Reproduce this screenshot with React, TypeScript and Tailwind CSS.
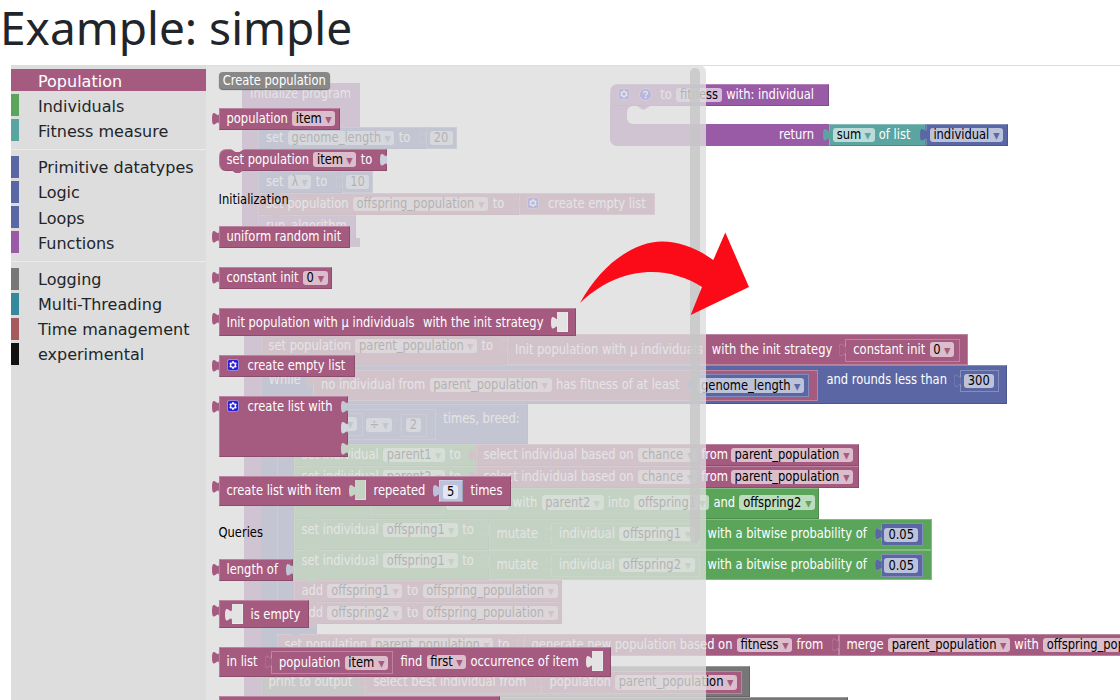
import React from 'react';

const PINK = '#a55b80';
const BLUE = '#5b67a5';
const GREEN = '#5ba55b';
const PURPLE = '#995ba5';
const TEAL = '#5ba5a1';
const GRAY = '#777777';
const PANEL = '#e3e3e3';

const Gear = () => (
  <svg className="mt-[1.7px] mr-[4.7px] h-3 w-3 shrink-0" viewBox="0 0 16 16">
    <rect x="0.5" y="0.5" width="15" height="15" rx="3" fill="#2b1fd6" stroke="#b9b5f2" />
    <path
      fill="#fff"
      d="m4.203,7.296 0,1.368 -0.92,0.677 -0.11,0.41 0.9,1.59 0.41,0.11 1.043,-0.457 1.187,0.683 0.127,1.134 0.3,0.3 1.8,0 0.3,-0.299 0.127,-1.138 1.185,-0.682 1.046,0.458 0.409,-0.11 0.9,-1.59 -0.11,-0.41 -0.92,-0.677 0,-1.366 0.92,-0.677 0.11,-0.41 -0.9,-1.59 -0.409,-0.109 -1.046,0.458 -1.185,-0.682 -0.127,-1.138 -0.3,-0.299 -1.8,0 -0.3,0.3 -0.126,1.135 -1.187,0.682 -1.043,-0.457 -0.41,0.11 -0.899,1.59 0.108,0.409z"
    />
    <circle cx="8" cy="8" r="2.4" fill="#2b1fd6" />
  </svg>
);

const Help = () => (
  <svg className="mt-[1.5px] mr-[4px] h-[13px] w-[13px] shrink-0" viewBox="0 0 16 16">
    <circle cx="8" cy="8" r="7.5" fill="#2b1fd6" stroke="#b9b5f2" />
    <path d="M5.7 6.4c0-3 4.7-3 4.7-.3 0 1.7-2.2 1.6-2.2 3.4" fill="none" stroke="#fff" strokeWidth="1.7" />
    <circle cx="8.1" cy="11.7" r="1.1" fill="#fff" />
  </svg>
);

const TAB_PATH = 'M8,5 c0,10 -8,-8 -8,7.5 s8,-2.5 8,7.5z';

const OutputTab = ({ color, edge }: { color: string; edge?: boolean }) => (
  <svg className="absolute -top-px -left-[7.2px] z-10 h-[17.4px] w-[7px]" viewBox="0 0 8 20">
    <path d={TAB_PATH} fill={color} stroke={edge ? 'rgba(255,255,255,.2)' : 'none'} />
  </svg>
);

const Notch = ({ color }: { color: string }) => (
  <svg className="absolute top-full left-[11px] z-10 h-[3.6px] w-[13px]" viewBox="0 0 15 4">
    <path d="M0,0 L6,4 L9,4 L15,0z" fill={color} />
  </svg>
);

type BlockProps = {
  w: number;
  h?: number;
  color: string;
  pt?: number;
  pl?: number;
  ml?: number;
  mt?: number;
  tab?: boolean;
  frame?: boolean;
  notch?: boolean;
  flat?: boolean;
  round?: string;
  holes?: [number, string][];
  children?: React.ReactNode;
};

const Block = ({
  w,
  h = 22,
  color,
  pt = 2.5,
  pl = 8,
  ml = 0,
  mt = 0,
  tab,
  frame,
  notch,
  flat,
  round = '',
  holes = [],
  children,
}: BlockProps) => (
  <div
    className={`relative flex shrink-0 items-start gap-[4.3px] border ${round} ${
      flat ? 'border-transparent' : frame ? 'border-white/25' : 'border-t-white/25 border-l-white/20 border-r-black/15 border-b-black/15'
    }`}
    style={{
      width: w,
      height: h,
      backgroundColor: color,
      paddingTop: pt - 1,
      paddingLeft: pl - 1,
      marginLeft: ml,
      marginTop: mt,
    }}
  >
    {children}
    {tab && <OutputTab color={color} edge={frame} />}
    {notch && <Notch color={color} />}
    {holes.map(([y, fill]) => (
      <svg key={y} className="absolute -right-px h-[17.4px] w-[7px]" style={{ top: y - 1 }} viewBox="0 0 8 20">
        <path d={TAB_PATH} fill={fill} />
      </svg>
    ))}
  </div>
);

type TextProps = { w?: number; ml?: number; dark?: boolean; children: string };

const T = ({ w, ml = 0, dark, children }: TextProps) => (
  <span
    className={`mt-[0.6px] block h-4 shrink-0 origin-[50%_75%] scale-y-[1.05] leading-4 whitespace-pre ${
      dark ? 'text-black' : 'text-white'
    }`}
    style={{ width: w, marginLeft: ml }}
  >
    {children}
  </span>
);

const F = ({ w, c, ml = 0, children }: { w: number; c?: string; ml?: number; children?: string }) => (
  <span
    className={`mt-[1.3px] flex h-[14.4px] shrink-0 items-center rounded-[3px] bg-white/60 px-[3.7px] leading-4 text-black ${
      c ? 'justify-between' : 'justify-center'
    }`}
    style={{ width: w, marginLeft: ml }}
  >
    <span className="origin-[50%_75%] scale-y-[1.05] whitespace-pre">{children}</span>
    {c && (
      <span className="text-[14px]" style={{ color: c }}>
        ▾
      </span>
    )}
  </span>
);

const Socket = ({ ml = 0, h = 20, color = PANEL }: { ml?: number; h?: number; color?: string }) => (
  <div
    className="relative -mt-[2.1px] w-[11px] shrink-0 border-r border-b border-white/30"
    style={{ height: h, marginLeft: ml, backgroundColor: color }}
  >
    <svg className="absolute top-0 -left-[6.3px] h-[17.4px] w-[7px]" viewBox="0 0 8 20">
      <path d={TAB_PATH} fill={color} />
    </svg>
  </div>
);

const Line = ({ children }: { children: React.ReactNode }) => <div className="flex">{children}</div>;

const InitializeProgram = () => (
  <div className="absolute top-[83px] left-[242px] flex flex-col">
    <Block w={117.5} h={44} color={PURPLE} flat>
      <T>Initialize program</T>
    </Block>
    <Line>
      <div className="w-4 bg-[#995ba5]" />
      <div className="flex flex-col">
        <Line>
          <Block w={167.5} color={BLUE} notch>
            <T>set</T>
            <F w={106.5} c={BLUE}>genome_length</F>
            <T>to</T>
          </Block>
          <Block w={31} color={BLUE} tab frame pl={4}>
            <F w={23}>20</F>
          </Block>
        </Line>
        <Block w={115} color={BLUE} notch />
        <Line>
          <Block w={84} color={BLUE} notch>
            <T>set</T>
            <F w={23.5} c={BLUE}>λ</F>
            <T>to</T>
          </Block>
          <Block w={31} color={BLUE} tab frame pl={4}>
            <F w={23}>10</F>
          </Block>
        </Line>
        <Line>
          <Block w={261} color={PINK} notch>
            <T>set population</T>
            <F w={135.5} c={PINK}>offspring_population</F>
            <T>to</T>
          </Block>
          <Block w={135.5} color={PINK} tab frame>
            <Gear />
            <T>create empty list</T>
          </Block>
        </Line>
        <Block w={97.5} h={23} color={PURPLE}>
          <T>run_algorithm</T>
        </Block>
      </div>
    </Line>
    <Block w={117.5} h={9} color={PURPLE} flat />
  </div>
);

const FitnessFunction = () => (
  <div className="absolute top-[84px] left-[610px] flex flex-col">
    <Block w={219} color={PURPLE} round="rounded-tl-[7px]">
      <Gear />
      <Help />
      <T>to</T>
      <F w={45.7}>fitness</F>
      <T>with: individual</T>
    </Block>
    <div className="flex h-[18px] w-[30px] bg-[#995ba5] pl-[17px]">
      <div className="relative w-[13px] rounded-l-[6px] bg-white">
        <svg className="absolute top-0 left-[10px] h-[3.6px] w-[13px]" viewBox="0 0 15 4">
          <path d="M0,0 L6,4 L9,4 L15,0z" fill={PURPLE} />
        </svg>
      </div>
    </div>
    <Line>
      <Block w={219} color={PURPLE} pl={169} flat round="rounded-bl-[7px]">
        <T>return</T>
      </Block>
      <Block w={97} color={TEAL} tab pl={4}>
        <F w={41.5} c={TEAL}>sum</F>
        <T>of list</T>
      </Block>
      <Block w={81.5} color={BLUE} tab pl={3.7}>
        <F w={73.7} c={BLUE}>individual</F>
      </Block>
    </Line>
  </div>
);

const SelectRow = ({ parent }: { parent: string }) => (
  <Line>
    <Block w={182} color={GREEN} notch>
      <T>set individual</T>
      <F w={62} c={GREEN}>{parent}</F>
      <T>to</T>
    </Block>
    <Block w={383.5} color={PINK} tab>
      <T>select individual based on</T>
      <F w={59} c={PINK}>chance</F>
      <T w={25.3}>from</T>
      <F w={122.3} c={PINK}>parent_population</F>
    </Block>
  </Line>
);

const MutateRow = ({ source }: { source: string }) => (
  <Line>
    <Block w={195} h={30.75} color={GREEN} notch pt={2.6}>
      <T>set individual</T>
      <F w={75} c={GREEN}>offspring1</F>
      <T>to</T>
    </Block>
    <Block w={443.7} h={30.75} color={GREEN} tab frame pt={6.5}>
      <T w={50.2}>mutate</T>
      <Block w={149} h={23} mt={-2} color={GREEN} tab frame>
        <T>individual</T>
        <F w={75.5} c={GREEN}>{source}</F>
      </Block>
      <T ml={3.2} w={169}>with a bitwise probability of</T>
      <Block w={42} h={23} mt={-2} color={BLUE} tab frame pl={3.7} pt={3}>
        <F w={33.5}>0.05</F>
      </Block>
    </Block>
  </Line>
);

const AddRow = ({ item }: { item: string }) => (
  <Block w={268.5} color={PINK} notch>
    <T>add</T>
    <F w={75} c={PINK}>{item}</F>
    <T>to</T>
    <F w={135} c={PINK}>offspring_population</F>
  </Block>
);

const RepeatLoop = () => (
  <>
    <Block w={251.5} h={39.5} color={BLUE} pt={6.6} pl={23.5}>
      <Block w={136} h={31} mt={-1.6} color={BLUE} frame pt={7}>
        <Block w={55} h={23} mt={-3} color={BLUE} frame pl={17}>
          <F w={32} c={BLUE} />
        </Block>
        <F ml={-1.5} w={26.5} c={BLUE}>÷</F>
        <Block ml={4} w={26} h={23} mt={-2.5} color={BLUE} tab frame pl={5}>
          <F w={15.5}>2</F>
        </Block>
      </Block>
      <T ml={3}>times, breed:</T>
    </Block>
    <Line>
      <div className="w-[17px] border-l border-white/25 bg-[#5b67a5]" />
      <div className="flex flex-col">
        <SelectRow parent="parent1" />
        <SelectRow parent="parent2" />
        <Block w={525.5} h={31} color={GREEN} notch pt={6.4}>
          <Block w={73} h={23} ml={69} mt={-2.5} color={GREEN} frame />
          <F w={63} ml={-2.3} />
          <T>with</T>
          <F w={62} c={GREEN}>parent2</F>
          <T>into</T>
          <F w={75} c={GREEN}>offspring1</F>
          <T>and</T>
          <F w={75.7} c={GREEN}>offspring2</F>
        </Block>
        <MutateRow source="offspring1" />
        <MutateRow source="offspring2" />
        <AddRow item="offspring1" />
        <AddRow item="offspring2" />
      </div>
    </Line>
    <Block w={40} h={9.5} color={BLUE} flat notch />
  </>
);

const Algorithm = () => (
  <div className="absolute top-[312px] left-[243.5px] flex">
    <div className="w-[17px] bg-[#995ba5]" />
    <div className="flex flex-col pt-[22px]">
      <Line>
        <Block w={246.5} h={31} color={PINK} notch pt={3.3}>
          <T>set population</T>
          <F w={121.8} c={PINK}>parent_population</F>
          <T>to</T>
        </Block>
        <Block w={460.5} h={31} color={PINK} tab frame pt={7}>
          <T w={192.5}>Init population with µ individuals</T>
          <T w={129.2}>with the init strategy</T>
          <Block w={114.5} h={23} mt={-2.5} color={PINK} tab frame pt={2.7}>
            <T>constant init</T>
            <F w={24.5} c={PINK}>0</F>
          </Block>
        </Block>
      </Line>
      <Block w={746.5} h={39.3} color={BLUE} pt={6.7}>
        <T w={40.2}>While</T>
        <Block w={505.5} h={31} mt={-2.2} color={PINK} tab frame pt={7}>
          <T>no individual from</T>
          <F w={122} c={PINK}>parent_population</F>
          <T w={133.2}>has fitness of at least</T>
          <Block w={115.7} h={23} mt={-2.5} color={BLUE} tab frame pl={4} pt={3}>
            <F w={106.7} c={BLUE}>genome_length</F>
          </Block>
        </Block>
        <T ml={3.7} w={129.2}>and rounds less than</T>
        <Block w={39.5} h={22.5} mt={-2.2} color={BLUE} tab frame pl={4} pt={2.8}>
          <F w={29.7}>300</F>
        </Block>
      </Block>
      <Line>
        <div className="w-4 bg-[#5b67a5]" />
        <div className="flex flex-col">
          <RepeatLoop />
          <Line>
            <Block w={247} h={22.2} color={PINK} notch pt={2.8}>
              <T>set population</T>
              <F w={122} c={PINK}>parent_population</F>
              <T>to</T>
            </Block>
            <Block w={315} h={22.2} color={PINK} tab frame pt={2.8}>
              <T w={200.9}>generate new population based on</T>
              <F w={55.5} c={PINK}>fitness</F>
              <T>from</T>
            </Block>
            <Block w={350} h={22.2} color={PINK} tab frame pt={2.8}>
              <T>merge</T>
              <F w={122} c={PINK}>parent_population</F>
              <T>with</T>
              <F w={135.5} c={PINK}>offspring_population</F>
            </Block>
          </Line>
        </div>
      </Line>
      <Block w={100} h={10.5} color={BLUE} flat notch />
      <Block w={489.5} h={30.5} color={GRAY} notch pt={6.8}>
        <T w={92.7}>print to output</T>
        <Block w={377} h={23} mt={-2.2} color={PINK} tab frame pt={2.8}>
          <T w={163.7}>select best individual from</T>
          <Block w={201} h={23} mt={-2.8} color={PINK} tab frame pt={2.8}>
            <T>population</T>
            <F w={122} c={PINK}>parent_population</F>
          </Block>
        </Block>
      </Block>
      <Block w={587} h={20} color={GRAY} />
    </div>
  </div>
);

const FlyoutBlocks = () => (
  <div className="flex flex-col gap-[19px] pt-[6px] pl-[12.5px]">
    <div className="-mb-[0.5px] mt-[0.5px] flex h-[17.7px] w-[111.5px] items-center justify-center rounded-[4px] bg-[#888] leading-4 text-white shadow-[0_1px_1px_#666]">
      <span className="relative top-px scale-y-[1.05]">Create population</span>
    </div>
    <Block w={121} color={PINK} tab>
      <T>population</T>
      <F w={43.3} c={PINK}>item</F>
    </Block>
    <Block w={168.2} color={PINK} notch round="rounded-l-[7px]" holes={[[0, '#ccd0dd']]}>
      <svg className="absolute -top-px left-[11px] h-[3.6px] w-[13px]" viewBox="0 0 15 4">
        <path d="M0,0 L6,4 L9,4 L15,0z" fill={PANEL} />
      </svg>
      <T>set population</T>
      <F w={43} c={PINK}>item</F>
      <T>to</T>
    </Block>
    <div className="h-[17.3px] pt-[1.9px]">
      <T dark>Initialization</T>
    </div>
    <Block w={131.8} color={PINK} tab>
      <T>uniform random init</T>
    </Block>
    <Block w={113.5} color={PINK} tab>
      <T>constant init</T>
      <F w={25} c={PINK}>0</F>
    </Block>
    <Block w={357.5} h={28} color={PINK} tab pt={6.4}>
      <T w={192.2}>Init population with µ individuals</T>
      <T w={129.7}>with the init strategy</T>
      <Socket />
    </Block>
    <Block w={136} color={PINK} tab>
      <Gear />
      <T>create empty list</T>
    </Block>
    <Block
      w={129.5}
      h={61}
      color={PINK}
      tab
      holes={[
        [0, '#c1c8d6'],
        [21.5, '#d3d6df'],
        [42.5, '#c5d1c5'],
      ]}
    >
      <Gear />
      <T>create list with</T>
    </Block>
    <Block w={292.5} h={30.5} color={PINK} tab pt={6.6}>
      <T w={124.2}>create list with item</T>
      <Socket h={19.5} color="#c5d3c5" />
      <T ml={3.2} w={61.2}>repeated</T>
      <Block w={24} mt={-2.1} color="#bcc2dc" tab pl={4} pt={3}>
        <F w={15.5}>5</F>
      </Block>
      <T ml={3.2}>times</T>
    </Block>
    <div className="-mt-[1.5px] h-[15.7px]">
      <T dark>Queries</T>
    </div>
    <Block w={74.5} color={PINK} tab holes={[[0, '#c2c6d4']]}>
      <T>length of</T>
    </Block>
    <Block w={90.5} h={28.3} color={PINK} tab pt={6.6}>
      <Socket ml={5} />
      <T ml={3.7}>is empty</T>
    </Block>
    <Block w={392.5} h={30} color={PINK} tab pt={6.3}>
      <T w={40.2}>in list</T>
      <Block w={122.5} h={22.5} mt={-1.8} color={PINK} tab frame pt={2.8}>
        <T>population</T>
        <F w={43.7} c={PINK}>item</F>
      </Block>
      <T ml={2.7}>find</T>
      <F w={39.5} c={PINK}>first</F>
      <T w={117.2}>occurrence of item</T>
      <Socket />
    </Block>
    <Block w={281.5} color={PINK} tab />
  </div>
);

const Category = ({ name, strip, selected }: { name: string; strip: string; selected?: boolean }) => (
  <li
    className={`mb-[3px] flex h-[22.1px] shrink-0 items-center border-l-8 pt-[3px] pl-[19px] text-[16px] leading-[22px] whitespace-nowrap ${strip} ${
      selected ? 'bg-[#a55b80] text-white' : 'text-[#212529]'
    }`}
  >
    {name}
  </li>
);

const Separator = () => <li className="mt-[5px] mb-[5.5px] h-px shrink-0 bg-[#ebebeb]" />;

export default function App() {
  return (
    <div className="relative flex h-[700px] w-[1120px] flex-col overflow-hidden bg-white">
      <h1 className="h-[65px] shrink-0 font-['Noto_Sans',sans-serif] text-[46px] leading-[54px] whitespace-nowrap text-[#212529]">
        Example: simple
      </h1>
      <div className="flex h-[635px] pl-[11px] font-['DejaVu_Sans',sans-serif]">
        <ul className="flex w-[195px] shrink-0 flex-col bg-[#ddd] pt-1">
          <Category name="Population" strip="border-[#a55b80]" selected />
          <Category name="Individuals" strip="border-[#5ba55b]" />
          <Category name="Fitness measure" strip="border-[#5ba5a1]" />
          <Separator />
          <Category name="Primitive datatypes" strip="border-[#5b67a5]" />
          <Category name="Logic" strip="border-[#5b67a5]" />
          <Category name="Loops" strip="border-[#5b67a5]" />
          <Category name="Functions" strip="border-[#995ba5]" />
          <Separator />
          <Category name="Logging" strip="border-[#777777]" />
          <Category name="Multi-Threading" strip="border-[#348a9b]" />
          <Category name="Time management" strip="border-[#a55b5b]" />
          <Category name="experimental" strip="border-[#111111]" />
        </ul>
        <div className="grow border-t border-[#ddd]" />
      </div>
      <div className="absolute inset-0 overflow-hidden font-['DejaVu_Sans_Condensed','DejaVu_Sans',sans-serif] text-[12.8px] [font-stretch:condensed]">
        <div className="absolute inset-0 isolate">
          <InitializeProgram />
          <FitnessFunction />
          <Algorithm />
        </div>
        <div className="absolute top-[65px] left-[206px] isolate h-[635px] w-[499.5px] rounded-tr-[7px] bg-[#ddd]/80">
          <div className="absolute top-[3px] right-[5.5px] h-[475px] w-[10px] rounded-[5px] bg-[#c5c5c5]/80" />
          <FlyoutBlocks />
        </div>
        <svg className="absolute inset-0 h-[700px] w-[1120px]" viewBox="0 0 1120 700">
          <path
            d="M580,303 C602,263 635,241.5 662,241.5 C680,241.5 698,249 713.3,260 L725.3,232.5 L749,287 L690.7,315 L702,287 C688,278 670,272 652,272 C628,272 603,281 580,303z"
            fill="#fb0a18"
          />
        </svg>
      </div>
    </div>
  );
}
